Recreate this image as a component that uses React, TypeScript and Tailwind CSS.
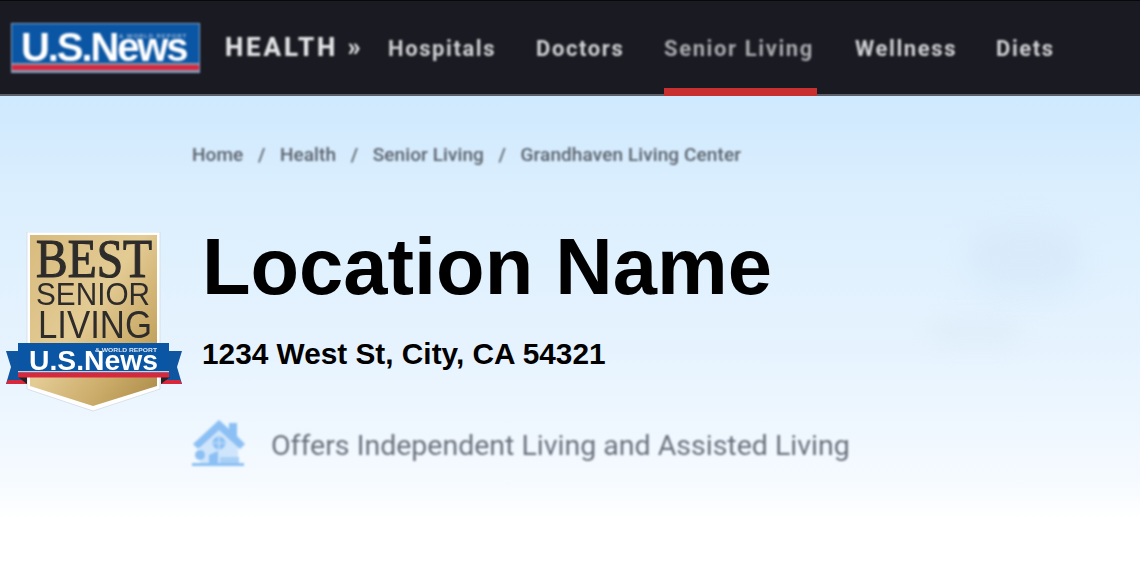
const navItems = [
  { label: "Hospitals", width: "w-[108px]" },
  { label: "Doctors", width: "w-[88px]" },
  { label: "Senior Living", width: "w-[151px]", active: true },
  { label: "Wellness", width: "w-[101px]" },
  { label: "Diets", width: "w-[58px]" },
];

const crumbs = ["Home", "Health", "Senior Living", "Grandhaven Living Center"];

function Logo() {
  return (
    <div className="w-[189px] h-[50px] bg-[#0b56a4] border border-[#7fa6cf] relative overflow-hidden blur-[0.8px] shrink-0">
      <span className="absolute left-[9px] top-[1px] text-white text-[40px] leading-[44px] tracking-[-2.1px] font-bold font-['Liberation_Sans'] whitespace-nowrap">
        U.S.News
      </span>
      <span className="absolute right-[12px] top-[9px] text-[#9dbbdc] text-[6px] leading-[6px] font-bold font-['Liberation_Sans'] tracking-[0.9px] whitespace-nowrap">
        &amp; WORLD REPORT
      </span>
      <div className="absolute left-0 right-0 bottom-0 h-[9px] bg-[#8e95a8]">
        <div className="h-[5px] mt-[2px] bg-[#d7263d]"></div>
      </div>
    </div>
  );
}

function Header() {
  return (
    <header className="h-[96px] bg-[#1a1a22] border-t border-[#08080b] border-b-2 border-b-[#5d6068] flex items-start relative">
      <div className="ml-[11px] mt-[22px]">
        <Logo />
      </div>
      <div className="ml-[25px] mt-[31px] w-[163px] text-[#e3e4e6] text-[26px] leading-[30px] font-extrabold font-['Roboto',sans-serif] tracking-[2.8px] blur-[0.8px] whitespace-nowrap">
        HEALTH »
      </div>
      <nav className="flex gap-[40px]">
        {navItems.map((item) => (
          <div key={item.label} className={`${item.width} h-[93px] relative`}>
            <div
              className={`mt-[34px] text-[22px] leading-[28px] font-bold font-['Roboto',sans-serif] tracking-[1.6px] blur-[0.8px] whitespace-nowrap ${
                item.active ? "text-[#a9abb0]" : "text-[#d0d1d4]"
              }`}
            >
              {item.label}
            </div>
            {item.active && (
              <div className="absolute left-0 right-[-2px] bottom-[-2px] h-[8px] bg-[#c7302f] blur-[0.4px]"></div>
            )}
          </div>
        ))}
      </nav>
    </header>
  );
}

function Badge() {
  return (
    <svg width="178" height="180" viewBox="0 0 178 180" className="shrink-0 blur-[0.3px]">
      <defs>
        <linearGradient id="gold" x1="0" y1="0" x2="1" y2="1">
          <stop offset="0" stopColor="#d8bb7e" />
          <stop offset="0.45" stopColor="#e3cb94" />
          <stop offset="0.75" stopColor="#c9a966" />
          <stop offset="1" stopColor="#ab8a49" />
        </linearGradient>
      </defs>
      <path d="M22 0H155V157L88 179L22 157Z" fill="#fff" stroke="#d4dae2" strokeWidth="0.8" />
      <path d="M25 3H152V154L88 174L25 154Z" fill="url(#gold)" />
      <text x="31" y="45" fontFamily="Liberation Serif" fontSize="55" textLength="116" lengthAdjust="spacingAndGlyphs" fill="#2e2c2b" stroke="#2e2c2b" strokeWidth="1.2">
        BEST
      </text>
      <text x="31" y="73" fontFamily="Liberation Sans" fontSize="31" textLength="114" lengthAdjust="spacingAndGlyphs" fill="#2e2c2b">
        SENIOR
      </text>
      <text x="33" y="106" fontFamily="Liberation Sans" fontSize="39" textLength="114" lengthAdjust="spacingAndGlyphs" fill="#2e2c2b">
        LIVING
      </text>
      <path d="M1 119H22V152H1L6 135Z" fill="#0f56a0" />
      <path d="M177 119H156V152H177L172 135Z" fill="#0f56a0" />
      <path d="M3 148H22V152H1Z" fill="#d7283c" />
      <path d="M175 148H156V152H177Z" fill="#d7283c" />
      <path d="M13 145H22V152Z" fill="#222" />
      <path d="M165 145H156V152Z" fill="#222" />
      <rect x="13" y="111" width="151" height="34" fill="#0b56a4" />
      <rect x="13" y="139" width="151" height="1.5" fill="#c9d3de" />
      <rect x="13" y="140.5" width="151" height="5" fill="#d7283c" />
      <text x="24" y="138" fontFamily="Liberation Sans" fontWeight="700" fontSize="27" textLength="129" lengthAdjust="spacingAndGlyphs" fill="#fff">
        U.S.News
      </text>
      <text x="90" y="120" fontFamily="Liberation Sans" fontWeight="700" fontSize="5.5" textLength="62" lengthAdjust="spacingAndGlyphs" fill="#dbe7f3">
        &amp; WORLD REPORT
      </text>
    </svg>
  );
}

function HouseIcon() {
  return (
    <svg width="54" height="50" viewBox="0 0 54 50" className="blur-[0.8px] shrink-0">
      <path d="M8 27L27 10L46 27V44H8Z" fill="#cfe5fb" />
      <path d="M1 25L27 1L37 10V4H45V17L53 25L48 30L27 11L6 30Z" fill="#8cc0f4" />
      <circle cx="27" cy="24" r="6.5" fill="#8cc0f4" />
      <path d="M27 18V30M21 24H33" stroke="#cfe5fb" strokeWidth="1.2" />
      <circle cx="8" cy="36" r="5" fill="#8cc0f4" />
      <path d="M17 36L26 32V46H17Z" fill="#8cc0f4" />
      <path d="M28 38H47V45H28Z" fill="#a9d0f6" />
      <path d="M0 44H52V47H0Z" fill="#8cc0f4" />
    </svg>
  );
}

export default function App() {
  return (
    <div className="w-[1140px] h-[570px] bg-white overflow-hidden font-['Liberation_Sans',sans-serif]">
      <Header />
      <main className="h-[424px] bg-[linear-gradient(#cfe9fe_0%,#dceffe_25%,#e6f3fe_60%,#f5faff_90%,#ffffff_100%)] relative">
        {/* faint blurred shapes behind the hero */}
        <div className="absolute left-[965px] top-[130px] w-[120px] h-[70px] rounded-full bg-[#cfe3f6] opacity-40 blur-[14px]"></div>
        <div className="absolute left-[930px] top-[220px] w-[90px] h-[30px] rounded-full bg-[#d9e8f5] opacity-40 blur-[10px]"></div>

        <div className="relative pl-[192px] pt-[47px] flex items-center gap-[14.5px] text-[19px] leading-[24px] tracking-[0.1px] text-[#5a606a] font-medium font-['Roboto',sans-serif] blur-[0.9px]">
          {crumbs.map((crumb, i) => (
            <div key={crumb} className="flex items-center gap-[14.5px]">
              {i > 0 && <span>/</span>}
              <span>{crumb}</span>
            </div>
          ))}
        </div>

        <div className="relative flex mt-[65px] pl-[5px]">
          <Badge />
          <div className="ml-[19px]">
            <h1 className="text-[79.5px] leading-[80px] font-bold text-black mt-[-5px]">Location Name</h1>
            <p className="text-[29.8px] leading-[32px] font-bold text-black mt-[31px]">1234 West St, City, CA 54321</p>
          </div>
        </div>

        <div className="absolute left-[192px] top-[323px] flex items-center gap-[25px]">
          <HouseIcon />
          <span className="mt-[4px] text-[28.5px] leading-[34px] text-[#6a717c] font-['Roboto',sans-serif] blur-[0.9px] whitespace-nowrap">
            Offers Independent Living and Assisted Living
          </span>
        </div>
      </main>
    </div>
  );
}
